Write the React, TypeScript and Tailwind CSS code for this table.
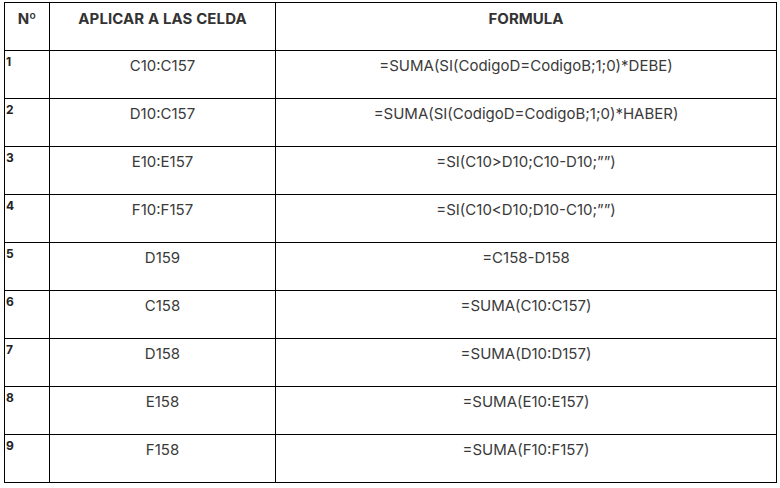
import React from 'react';

const rows = [
  { n: '1', cells: 'C10:C157', formula: '=SUMA(SI(CodigoD=CodigoB;1;0)*DEBE)' },
  { n: '2', cells: 'D10:C157', formula: '=SUMA(SI(CodigoD=CodigoB;1;0)*HABER)' },
  { n: '3', cells: 'E10:E157', formula: '=SI(C10>D10;C10-D10;””)' },
  { n: '4', cells: 'F10:F157', formula: '=SI(C10<D10;D10-C10;””)' },
  { n: '5', cells: 'D159', formula: '=C158-D158' },
  { n: '6', cells: 'C158', formula: '=SUMA(C10:C157)' },
  { n: '7', cells: 'D158', formula: '=SUMA(D10:D157)' },
  { n: '8', cells: 'E158', formula: '=SUMA(E10:E157)' },
  { n: '9', cells: 'F158', formula: '=SUMA(F10:F157)' },
];

export default function App() {
  return (
    <div className="w-[780px] h-[488px] bg-white pt-[2px] pl-[4px] font-['Inter','Liberation_Sans',sans-serif] text-[#3a3a3a]">
      <table className="w-[772px] border-collapse table-fixed">
        <colgroup>
          <col className="w-[45px]" />
          <col className="w-[226px]" />
          <col className="w-[501px]" />
        </colgroup>
        <thead>
          <tr className="h-[48px]">
            <th className="border border-black align-top pt-[5px] text-[15px] font-bold text-[#333]">Nº</th>
            <th className="border border-black align-top pt-[5px] text-[15px] font-bold text-[#333] tracking-[0.1px]">APLICAR A LAS CELDA</th>
            <th className="border border-black align-top pt-[5px] text-[15px] font-bold text-[#333]">FORMULA</th>
          </tr>
        </thead>
        <tbody>
          {rows.map((r) => (
            <tr key={r.n} className="h-[48px]">
              <td className="border border-black align-top pl-[1px] pt-[2px] text-[12px] font-bold text-[#222]">{r.n}</td>
              <td className="border border-black align-top pt-[4px] text-center text-[15px]">{r.cells}</td>
              <td className="border border-black align-top pt-[4px] text-center text-[15px]">{r.formula}</td>
            </tr>
          ))}
        </tbody>
      </table>
    </div>
  );
}
